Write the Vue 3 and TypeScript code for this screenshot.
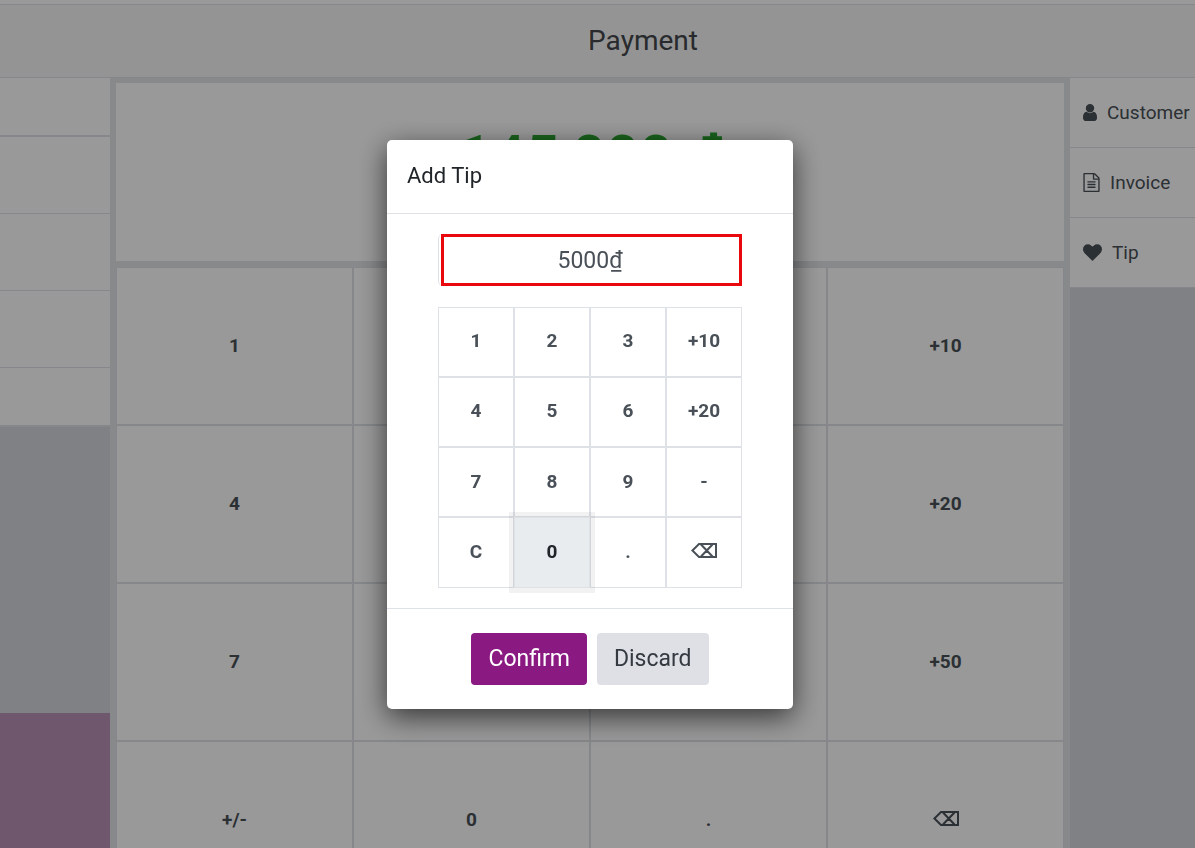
<script setup lang="ts">
import { ref } from 'vue'

const paymentKeys: string[] = ['1', '2', '3', '+10', '4', '5', '6', '+20', '7', '8', '9', '+50', '+/-', '0', '.', 'back']
const tipKeys: string[] = ['1', '2', '3', '+10', '4', '5', '6', '+20', '7', '8', '9', '-', 'C', '0', '.', 'back']

interface Action {
  label: string
  viewBox: string
  width: number
  height: number
  path: string
}

const actions: Action[] = [
  {
    label: 'Customer',
    viewBox: '256 128 1280 1536',
    width: 14,
    height: 17,
    path: 'M1536 1399q0 109-62.5 187t-150.5 78h-854q-88 0-150.5-78t-62.5-187q0-85 8.5-160.5t31.5-152 58.5-131 94-89 134.5-34.5q131 128 313 128t313-128q76 0 134.5 34.5t94 89 58.5 131 31.5 152 8.5 160.5zm-256-887q0 159-112.5 271.5t-271.5 112.5-271.5-112.5-112.5-271.5 112.5-271.5 271.5-112.5 271.5 112.5 112.5 271.5z',
  },
  {
    label: 'Invoice',
    viewBox: '128 0 1536 1792',
    width: 17,
    height: 19,
    path: 'M1596 380q28 28 48 76t20 88v1152q0 40-28 68t-68 28h-1344q-40 0-68-28t-28-68v-1600q0-40 28-68t68-28h896q40 0 88 20t76 48zm-444-244v376h376q-10-29-22-41l-313-313q-12-12-41-22zm384 1528v-1024h-416q-40 0-68-28t-28-68v-416h-768v1536h1280zm-1024-864q0-14 9-23t23-9h704q14 0 23 9t9 23v64q0 14-9 23t-23 9h-704q-14 0-23-9t-9-23v-64zm736 224q14 0 23 9t9 23v64q0 14-9 23t-23 9h-704q-14 0-23-9t-9-23v-64q0-14 9-23t23-9h704zm0 256q14 0 23 9t9 23v64q0 14-9 23t-23 9h-704q-14 0-23-9t-9-23v-64q0-14 9-23t23-9h704z',
  },
  {
    label: 'Tip',
    viewBox: '0 128 1792 1536',
    width: 19,
    height: 17,
    path: 'M896 1664q-26 0-44-18l-624-602q-10-8-27.5-26t-55.5-65.5-68-97.5-53.5-121-23.5-138q0-220 127-344t351-124q62 0 126.5 21.5t120 58 95.5 68.5 76 68q36-36 76-68t95.5-68.5 120-58 126.5-21.5q224 0 351 124t127 344q0 221-229 450l-623 600q-18 18-44 18z',
  },
]

const tip = ref('5000₫')
</script>

<template>
  <div class="screen">
    <div class="page">
      <header class="top"><h1>Payment</h1></header>
      <div class="columns">
        <aside class="methods">
          <div class="method heading"></div>
          <div class="method"></div>
          <div class="method"></div>
          <div class="method"></div>
          <div class="method last"></div>
          <div class="validate"></div>
        </aside>
        <main class="center">
          <section class="total">145,000 ₫</section>
          <div class="pad payment-pad">
            <button v-for="key in paymentKeys" :key="key" type="button" :aria-label="key === 'back' ? 'Backspace' : undefined">
              <svg v-if="key === 'back'" class="back" viewBox="0 0 26 16" aria-hidden="true">
                <path d="M8 1H25V14H8L1.4 7.5ZM10 1.5L21.5 13.5M21.5 1.5L10 13.5" />
              </svg>
              <template v-else>{{ key }}</template>
            </button>
          </div>
        </main>
        <aside class="actions">
          <button v-for="a in actions" :key="a.label" type="button" class="action">
            <svg :viewBox="a.viewBox" :width="a.width" :height="a.height" aria-hidden="true"><path :d="a.path" /></svg>
            <span>{{ a.label }}</span>
          </button>
        </aside>
      </div>
    </div>

    <div class="overlay">
      <div class="modal" role="dialog" aria-modal="true" aria-labelledby="tip-title">
        <header class="modal-head"><h2 id="tip-title">Add Tip</h2></header>
        <div class="modal-body">
          <div class="field"><input v-model="tip" type="text" aria-labelledby="tip-title" /></div>
          <div class="pad tip-pad">
            <button
              v-for="key in tipKeys"
              :key="key"
              type="button"
              :class="{ pressed: key === '0' }"
              :aria-label="key === 'back' ? 'Backspace' : undefined"
            >
              <svg v-if="key === 'back'" class="back" viewBox="0 0 26 16" aria-hidden="true">
                <path d="M8 1H25V14H8L1.4 7.5ZM10 1.5L21.5 13.5M21.5 1.5L10 13.5" />
              </svg>
              <template v-else>{{ key }}</template>
            </button>
          </div>
        </div>
        <footer class="modal-foot">
          <button type="button" class="confirm">Confirm</button>
          <button type="button" class="discard">Discard</button>
        </footer>
      </div>
    </div>
  </div>
</template>

<style>
body {
  margin: 0;
}
</style>

<style scoped>
.screen,
.screen * {
  box-sizing: border-box;
}
.screen {
  height: 100vh;
  overflow: hidden;
  font-family: Roboto, "Liberation Sans", sans-serif;
  font-size: 19px;
  color: #495057;
}
h1,
h2 {
  margin: 0;
  font-weight: 400;
}
button,
input {
  font: inherit;
  color: inherit;
  margin: 0;
}
.page {
  height: 100%;
  display: flex;
  flex-direction: column;
  background: #fff;
}
.top {
  flex: none;
  height: 74px;
  margin-top: 4px;
  padding: 0 0 2px 91px;
  display: flex;
  align-items: center;
  justify-content: center;
  background: #f7f7f7;
  border-top: 1px solid #dee2e6;
  border-bottom: 1px solid #dee2e6;
}
h1 {
  font-size: 28px;
  color: #44474b;
}
.columns {
  flex: 1;
  min-height: 0;
  display: grid;
  grid-template-columns: 110px 1fr 125px;
}
.methods,
.actions {
  background: #d6d8dd;
  display: flex;
  flex-direction: column;
}
.methods {
  min-height: 0;
}
.method {
  flex: none;
  height: 77px;
  background: #fff;
  border-bottom: 1px solid #dee2e6;
}
.heading,
.last {
  height: 59px;
  border-bottom-width: 2px;
}
.validate {
  flex: none;
  height: 135px;
  margin-top: auto;
  background: #b993b7;
}
.center {
  min-width: 0;
  min-height: 0;
  padding: 5px 6px 0;
  background: #e2e4e7;
  display: flex;
  flex-direction: column;
  gap: 6px;
}
.total {
  flex: none;
  height: 178px;
  padding-top: 39px;
  background: #fff;
  text-align: center;
  font-size: 59px;
  font-weight: 500;
  line-height: 70px;
  color: #2aa530;
}
.pad {
  flex: none;
  display: grid;
  grid-template-columns: repeat(4, 1fr);
}
.pad button {
  display: flex;
  align-items: center;
  justify-content: center;
  padding: 0 0 2px;
  border: 1px solid #dee2e6;
  background: #fff;
  font-size: 19px;
  font-weight: 700;
}
.payment-pad {
  grid-auto-rows: 158px;
}
.tip-pad {
  height: 281px;
  grid-template-rows: repeat(4, 1fr);
}
.pad .pressed {
  z-index: 1;
  background: #e8ecef;
  color: #212529;
  box-shadow: 0 0 0 5px rgba(33, 37, 41, 0.06);
}
.back {
  width: 26px;
  height: 16px;
  fill: none;
  stroke: currentColor;
  stroke-width: 2;
}
.action {
  flex: none;
  height: 70px;
  display: flex;
  align-items: center;
  gap: 10px;
  padding: 0 0 0 13px;
  background: #fff;
  border: 0;
  border-bottom: 1px solid #dee2e6;
  text-align: left;
}
.action svg {
  flex: none;
  fill: #495057;
}
.overlay {
  position: fixed;
  inset: 0;
  padding-right: 15px;
  display: flex;
  align-items: center;
  justify-content: center;
  background: rgba(0, 0, 0, 0.4);
}
.modal {
  width: 406px;
  background: #fff;
  border-radius: 5px;
  box-shadow: 0 8px 28px rgba(0, 0, 0, 0.65);
}
.modal-head {
  height: 74px;
  padding: 0 20px 2px;
  display: flex;
  align-items: center;
  border-bottom: 1px solid #dee2e6;
}
h2 {
  font-size: 22px;
  color: #212529;
}
.modal-body {
  width: 304px;
  margin: 0 auto;
  padding: 20px 0;
}
.field {
  margin-bottom: 21px;
  padding-left: 2px;
  border-left: 1px solid #dee2e6;
  border-radius: 5px;
}
.field input {
  display: block;
  width: 100%;
  height: 52px;
  padding: 2px 3px 0 0;
  border: 3px solid #e9080d;
  background: #fff;
  outline: none;
  text-align: center;
  font-size: 23px;
}
.modal-foot {
  padding: 24px 0;
  display: flex;
  justify-content: center;
  gap: 10px;
  border-top: 1px solid #dee2e6;
}
.modal-foot button {
  height: 52px;
  padding: 0 17px;
  border: 0;
  border-radius: 4px;
  font-size: 23px;
}
.modal-foot .confirm {
  background: #8a1a82;
  color: #fff;
}
.modal-foot .discard {
  background: #dee0e6;
  color: #343a40;
}
</style>
